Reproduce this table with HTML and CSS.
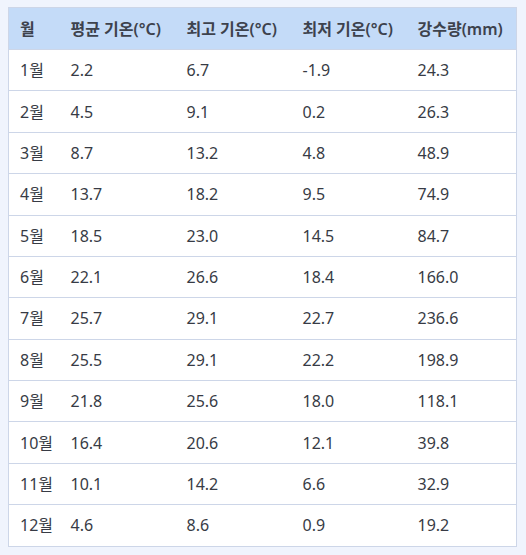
FILE: index.html
```html
<!DOCTYPE html>
<html lang="ko">
<head>
<meta charset="utf-8">
<link rel="stylesheet" href="styles.css">
</head>
<body>
<table class="climate">
  <colgroup>
    <col class="c1"><col class="c2"><col class="c3"><col class="c4"><col class="c5">
  </colgroup>
  <thead>
    <tr><th>월</th><th>평균 기온(°C)</th><th>최고 기온(°C)</th><th>최저 기온(°C)</th><th>강수량(mm)</th></tr>
  </thead>
  <tbody>
    <tr><td>1월</td><td>2.2</td><td>6.7</td><td>-1.9</td><td>24.3</td></tr>
    <tr><td>2월</td><td>4.5</td><td>9.1</td><td>0.2</td><td>26.3</td></tr>
    <tr><td>3월</td><td>8.7</td><td>13.2</td><td>4.8</td><td>48.9</td></tr>
    <tr><td>4월</td><td>13.7</td><td>18.2</td><td>9.5</td><td>74.9</td></tr>
    <tr><td>5월</td><td>18.5</td><td>23.0</td><td>14.5</td><td>84.7</td></tr>
    <tr><td>6월</td><td>22.1</td><td>26.6</td><td>18.4</td><td>166.0</td></tr>
    <tr><td>7월</td><td>25.7</td><td>29.1</td><td>22.7</td><td>236.6</td></tr>
    <tr><td>8월</td><td>25.5</td><td>29.1</td><td>22.2</td><td>198.9</td></tr>
    <tr><td>9월</td><td>21.8</td><td>25.6</td><td>18.0</td><td>118.1</td></tr>
    <tr><td>10월</td><td>16.4</td><td>20.6</td><td>12.1</td><td>39.8</td></tr>
    <tr><td>11월</td><td>10.1</td><td>14.2</td><td>6.6</td><td>32.9</td></tr>
    <tr><td>12월</td><td>4.6</td><td>8.6</td><td>0.9</td><td>19.2</td></tr>
  </tbody>
</table>
</body>
</html>
```
FILE: styles.css
```css
html, body {
  margin: 0;
  padding: 0;
  background: #f0f4fd;
}
body {
  padding: 7px 8px;
  font-family: "Noto Sans", "Noto Sans CJK KR", sans-serif;
  font-size: 16px;
  color: #373b45;
}
.climate {
  width: 508px;
  border-collapse: collapse;
  background: #ffffff;
  border: 1px solid #cdd6e8;
  table-layout: fixed;
}
.c1 { width: 51px; }
.c2 { width: 116px; }
.c3 { width: 116px; }
.c4 { width: 115px; }
.c5 { width: 110px; }
.climate th,
.climate td {
  text-align: left;
  padding: 10.2px 0 10.2px 11px;
  line-height: 20px;
  white-space: nowrap;
}
.climate th {
  background: #c4dbf8;
  font-weight: 600;
  color: #3d424d;
  padding-top: 10.5px;
  padding-bottom: 10.5px;
}
.climate td {
  border-top: 1px solid #cdd6e8;
}
```
